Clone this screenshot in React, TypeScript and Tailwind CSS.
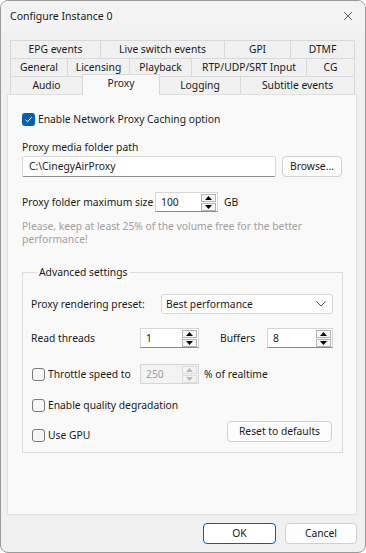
import { X } from 'lucide-react';

const font = { fontFamily: '"Noto Sans", "Segoe UI", sans-serif' };

type Tab = { label: string; w: string };

const row1: Tab[] = [
  { label: 'EPG events', w: 'w-[90px]' },
  { label: 'Live switch events', w: 'w-[124px]' },
  { label: 'GPI', w: 'w-[66px]' },
  { label: 'DTMF', w: 'w-[65px]' },
];

const row2: Tab[] = [
  { label: 'General', w: 'w-[57px]' },
  { label: 'Licensing', w: 'w-[62px]' },
  { label: 'Playback', w: 'w-[62px]' },
  { label: 'RTP/UDP/SRT Input', w: 'w-[115px]' },
  { label: 'CG', w: 'w-[49px]' },
];

function TabRow({ tabs }: { tabs: Tab[] }) {
  return (
    <div className="flex h-[18px] ml-[3px]">
      {tabs.map((t, i) => (
        <div
          key={t.label}
          className={`${t.w} flex items-center justify-center border-t border-l border-[#d9d9d9] bg-[#f0f0f0] ${i === tabs.length - 1 ? 'border-r' : ''}`}
        >
          {t.label}
        </div>
      ))}
    </div>
  );
}

function Checkbox({ checked }: { checked?: boolean }) {
  if (checked) {
    return (
      <span className="w-[13px] h-[13px] rounded-[3px] bg-[#005fb8] flex items-center justify-center shrink-0">
        <svg width="9" height="9" viewBox="0 0 9 9">
          <path d="M1.5 4.8 L3.6 6.8 L7.6 2.2" fill="none" stroke="white" strokeWidth="1" />
        </svg>
      </span>
    );
  }
  return <span className="w-[13px] h-[13px] rounded-[3px] border border-[#7a7a7a] bg-[#f6f6f6] shrink-0" />;
}

function SpinBox({ value, w, disabled }: { value: string; w: string; disabled?: boolean }) {
  const arrow = disabled ? '#b8b8b8' : '#000';
  return (
    <div className={`${w} h-[20px] flex items-center border border-[#d6d6d6] ${disabled ? 'bg-[#f3f3f3]' : 'bg-white border-b-[#8c8c8c]'}`}>
      <span className={`flex-1 pl-[5px] ${disabled ? 'text-[#a0a0a0]' : ''}`}>{value}</span>
      <div className="flex flex-col gap-px pr-px">
        <span className={`w-[15px] h-[8px] border flex items-center justify-center ${disabled ? 'border-[#dcdcdc]' : 'border-[#b4b4b4] bg-[#f7f7f7]'}`}>
          <svg width="7" height="4" viewBox="0 0 7 4"><path d="M3.5 0 L7 4 L0 4 Z" fill={arrow} /></svg>
        </span>
        <span className={`w-[15px] h-[8px] border flex items-center justify-center ${disabled ? 'border-[#dcdcdc]' : 'border-[#b4b4b4] bg-[#f7f7f7]'}`}>
          <svg width="7" height="4" viewBox="0 0 7 4"><path d="M0 0 L7 0 L3.5 4 Z" fill={arrow} /></svg>
        </span>
      </div>
    </div>
  );
}

function Button({ children, w, primary }: { children: string; w: string; primary?: boolean }) {
  return (
    <div
      className={`${w} h-[21px] flex items-center justify-center rounded-[4px] border ${primary ? 'border-[#005fb8] bg-white' : 'border-[#d0d0d0] bg-[#fdfdfd]'}`}
    >
      {children}
    </div>
  );
}

export default function App() {
  return (
    <div
      style={font}
      className="w-[366px] h-[553px] bg-[#f0f0f0] border border-[#9a9a9a] rounded-[8px] overflow-hidden flex flex-col text-[10.3px] text-[#1a1a1a] leading-none whitespace-nowrap"
    >
      {/* title bar */}
      <div className="h-[30px] shrink-0 flex items-center justify-between pl-[9px] pr-[10px] bg-[#f3f3f3] text-[10.5px]">
        <span>Configure Instance 0</span>
        <X className="w-[14px] h-[14px]" strokeWidth={1.2} />
      </div>

      <div className="pl-[6px]">
        {/* tabs */}
        <div className="mt-[9px]">
          <TabRow tabs={row1} />
          <TabRow tabs={row2} />
          <div className="flex items-end h-[18px] ml-[3px] relative z-10">
            <div className="w-[72px] h-[18px] flex items-center justify-center border-t border-l border-[#d9d9d9]">Audio</div>
            <div className="w-[78px] h-[21px] -mb-px flex items-center justify-center border-t border-l border-r border-[#d9d9d9] bg-[#f9f9f9] pb-[3px]">
              Proxy
            </div>
            <div className="w-[80px] h-[18px] flex items-center justify-center border-t border-[#d9d9d9]">Logging</div>
            <div className="w-[115px] h-[18px] flex items-center justify-center border-t border-l border-r border-[#d9d9d9]">Subtitle events</div>
          </div>
        </div>

        {/* panel */}
        <div className="w-[350px] h-[421px] border border-[#e0e0e0] bg-[#f9f9f9] pl-[14px] flex flex-col">
          <div className="mt-[16px] h-[16px] flex items-center gap-[3px]">
            <Checkbox checked />
            <span>Enable Network Proxy Caching option</span>
          </div>

          <div className="mt-[13px] h-[14px] flex items-center">Proxy media folder path</div>

          <div className="mt-[2px] flex items-center">
            <div className="w-[254px] h-[21px] flex items-center pl-[6px] bg-white border border-[#d6d6d6] border-b-[#8c8c8c] rounded-[2px]">
              C:\CinegyAirProxy
            </div>
            <div className="ml-[6px]">
              <Button w="w-[60px]">Browse...</Button>
            </div>
          </div>

          <div className="mt-[15px] flex items-center">
            <span className="w-[133px]">Proxy folder maximum size</span>
            <SpinBox value="100" w="w-[63px]" />
            <span className="ml-[6px]">GB</span>
          </div>

          <p className="mt-[8px] w-[300px] leading-[13px] text-[#a0a0a0] whitespace-normal">
            Please, keep at least 25% of the volume free for the better performance!
          </p>

          <fieldset className="mt-[19px] w-[321px] border border-[#dcdcdc] pl-[8px] pr-[8px] pb-[9px]">
            <legend className="ml-[6px] px-[2px] h-[14px] leading-[14px]">Advanced settings</legend>

            <div className="mt-[15px] flex items-center">
              <span className="w-[130px]">Proxy rendering preset:</span>
              <div className="w-[172px] h-[20px] flex items-center justify-between pl-[4px] pr-[6px] bg-white border border-[#d6d6d6] rounded-[3px]">
                <span>Best performance</span>
                <svg width="10" height="6" viewBox="0 0 10 6">
                  <path d="M0.5 0.5 L5 5 L9.5 0.5" fill="none" stroke="#555" strokeWidth="1" />
                </svg>
              </div>
            </div>

            <div className="mt-[14px] flex items-center">
              <span className="w-[109px]">Read threads</span>
              <SpinBox value="1" w="w-[59px]" />
              <span className="ml-[21px] w-[47px]">Buffers</span>
              <SpinBox value="8" w="w-[66px]" />
            </div>

            <div className="mt-[16px] flex items-center">
              <span className="w-[109px] flex items-center gap-[3px] pl-px">
                <Checkbox />
                <span>Throttle speed to</span>
              </span>
              <SpinBox value="250" w="w-[59px]" disabled />
              <span className="ml-[5px]">% of realtime</span>
            </div>

            <div className="mt-[13px] h-[16px] flex items-center gap-[3px] pl-px">
              <Checkbox />
              <span>Enable quality degradation</span>
            </div>

            <div className="mt-[8px] flex items-start justify-between pr-[2px]">
              <div className="mt-[6px] h-[16px] flex items-center gap-[3px] pl-px">
                <Checkbox />
                <span>Use GPU</span>
              </div>
              <Button w="w-[105px]">Reset to defaults</Button>
            </div>
          </fieldset>
        </div>
      </div>

      {/* footer */}
      <div className="mt-[8px] flex justify-end gap-[9px] pr-[8px]">
        <Button w="w-[73px]" primary>OK</Button>
        <Button w="w-[72px]">Cancel</Button>
      </div>
    </div>
  );
}
